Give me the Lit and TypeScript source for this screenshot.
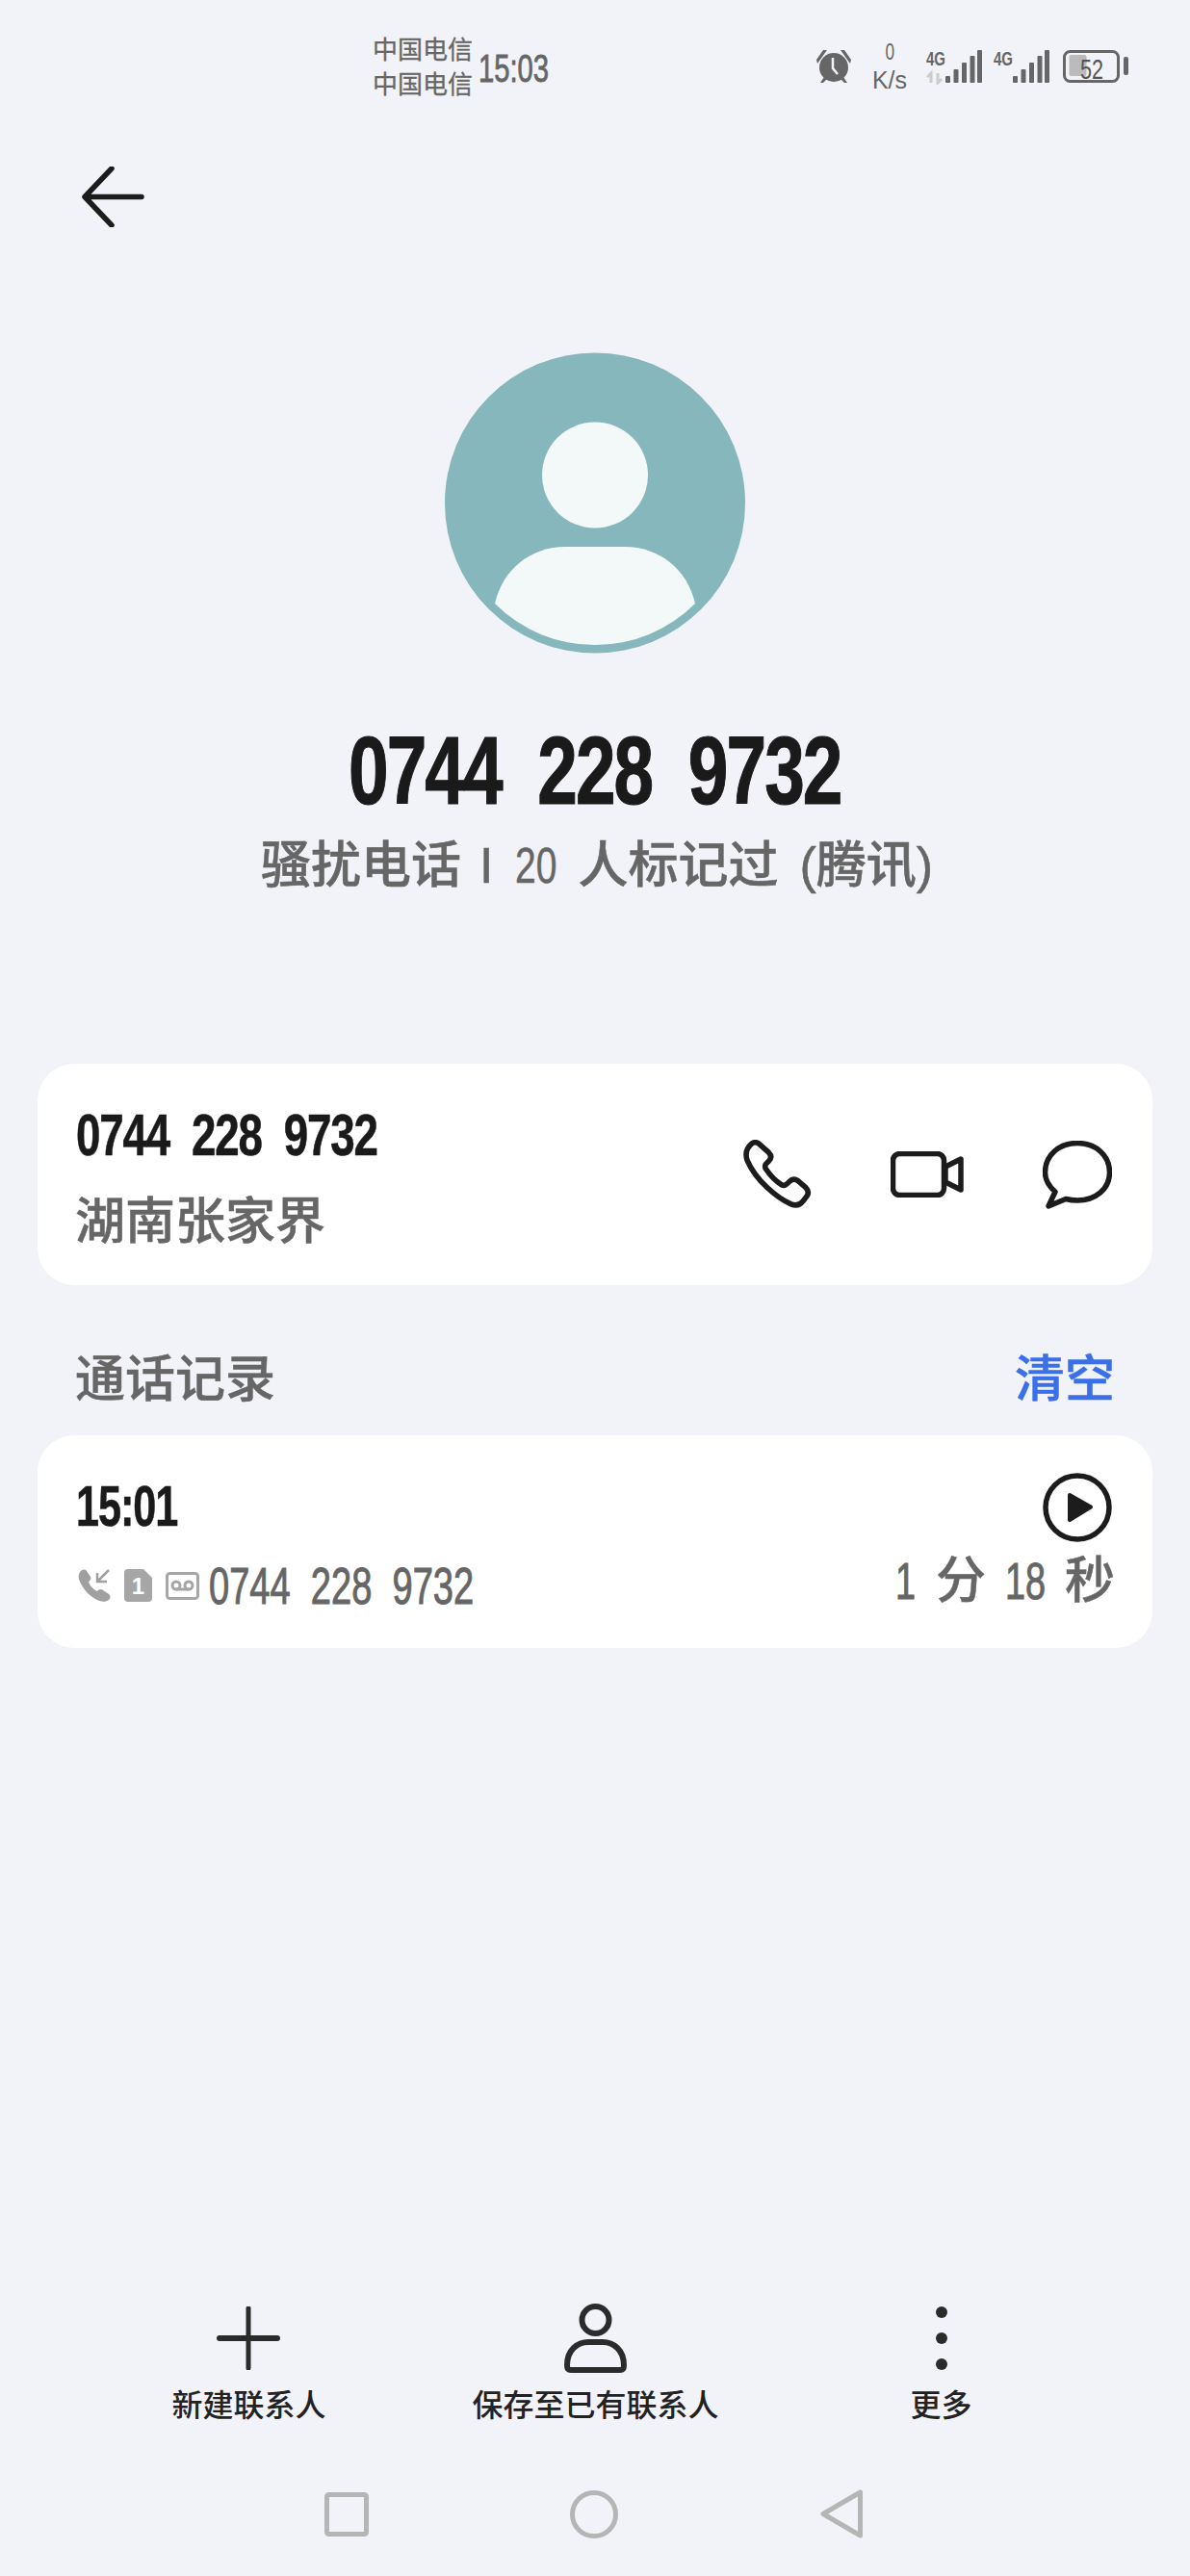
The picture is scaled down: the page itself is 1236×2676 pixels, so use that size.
import { LitElement, css, html, svg } from 'lit';
import { customElement } from 'lit/decorators.js';

// digits in the reference are much narrower than Liberation Sans, so they get squeezed
const sq = (text: string, cls: string) => html`<span class="sq ${cls}"><span>${text}</span></span>`;

const signal = (arrows: boolean) => html`
  <svg class="signal" width="58" height="38" viewBox="0 0 58 38">
    <text x="0" y="18" font-size="21" font-weight="700" fill="#666" textLength="20" lengthAdjust="spacingAndGlyphs">4G</text>
    ${arrows
      ? svg`<path d="M5 36V26l-4 4M12 26v10l4-4" fill="none" stroke="#ccc" stroke-width="3"/>`
      : null}
    <rect x="20" y="29" width="5" height="7" rx="1" fill="#666" />
    <rect x="28.500" y="22" width="5" height="14" rx="1" fill="#666" />
    <rect x="37" y="15" width="5" height="21" rx="1" fill="#666" />
    <rect x="45.500" y="8" width="5" height="28" rx="1" fill="#666" />
    <rect x="53" y="2" width="5" height="34" rx="1" fill="#666" />
  </svg>
`;

@customElement('app-root')
export class AppRoot extends LitElement {
  static styles = css`
    :host {
      display: flex;
      flex-direction: column;
      width: 1236px;
      height: 2676px;
      background: #f1f3f8;
      font-family: 'Liberation Sans', 'Noto Sans CJK SC', sans-serif;
      color: #666;
    }
    svg {
      display: block;
      flex: none;
    }
    .sq {
      display: inline-block;
      white-space: pre;
      flex: none;
    }
    .sq > span {
      display: inline-block;
      transform-origin: left center;
    }

    /* status bar */
    .status {
      display: flex;
      align-items: center;
      height: 138px;
      padding: 0 64px 0 387px;
      box-sizing: border-box;
    }
    .carriers {
      font-size: 26px;
      line-height: 36px;
      width: 104px;
      margin-top: 2px;
      -webkit-text-stroke: 0.3px #666;
    }
    .clock {
      width: 73px;
      margin: 4px 0 0 6px;
      font-size: 40px;
      line-height: 40px;
      -webkit-text-stroke: 0.8px #666;
    }
    .clock > span {
      transform: scaleX(0.73);
    }
    .alarm {
      margin-left: auto;
    }
    .speed {
      width: 36px;
      margin-left: 22px;
      display: flex;
      flex-direction: column;
      align-items: center;
      font-size: 25px;
      line-height: 29px;
    }
    .speed .zero {
      font-size: 23px;
      transform: scaleX(0.75);
    }
    .signal {
      margin-left: 20px;
    }
    .signal + .signal {
      margin-left: 12px;
    }
    .battery {
      margin-left: 14px;
    }

    .back {
      margin: 35px 0 0 85px;
    }
    .avatar {
      margin: 130px auto 0;
    }

    .title {
      display: flex;
      justify-content: center;
      margin-top: 71px;
      font-size: 101px;
      line-height: 101px;
      font-weight: 700;
      color: #1a1a1a;
      -webkit-text-stroke: 1.2px #1a1a1a;
    }
    .title .sq {
      width: 513px;
    }
    .title .sq > span {
      letter-spacing: -2.600px;
      transform: scaleX(0.74);
    }

    .subtitle {
      display: flex;
      margin-top: 22px;
      padding-left: 271px;
      font-size: 52px;
      line-height: 52px;
      font-weight: 500;
      -webkit-text-stroke: 0.5px #666;
    }
    .subtitle .bar {
      margin-left: 19px;
    }
    .subtitle .count {
      width: 44px;
      margin-left: 23px;
    }
    .subtitle .count > span {
      transform: scaleX(0.75);
    }
    .subtitle .marked {
      margin-left: 21px;
    }
    .subtitle .source {
      margin-left: 22px;
    }

    .card {
      margin: 0 39px;
      background: #fff;
      border-radius: 38px;
      padding: 0 42px;
      display: flex;
    }

    .contact {
      margin-top: 180px;
      height: 230px;
      align-items: center;
    }
    .contact-text {
      flex: 1;
      align-self: flex-start;
      padding-top: 44px;
    }
    .number {
      display: block;
      width: 312px;
      margin-left: -2px;
      font-size: 61px;
      line-height: 61px;
      font-weight: 700;
      color: #1a1a1a;
      -webkit-text-stroke: 0.6px #1a1a1a;
    }
    .number > span {
      letter-spacing: -1.600px;
      transform: scaleX(0.75);
    }
    .place {
      margin: 33px 0 0 -3px;
      font-size: 52px;
      line-height: 52px;
      font-weight: 500;
      -webkit-text-stroke: 0.5px #666;
    }
    .contact-actions {
      display: flex;
      align-items: center;
      gap: 82px;
    }

    .section {
      display: flex;
      justify-content: space-between;
      margin-top: 72px;
      padding: 0 78px;
      font-size: 52px;
      line-height: 52px;
      font-weight: 500;
      -webkit-text-stroke: 0.5px currentColor;
    }
    .clear {
      color: #3b6fe8;
    }

    .record {
      margin-top: 32px;
      height: 221px;
      justify-content: space-between;
    }
    .record-main {
      padding-top: 44px;
    }
    .time {
      display: block;
      width: 103px;
      margin-left: -2px;
      font-size: 60px;
      line-height: 60px;
      font-weight: 700;
      color: #1a1a1a;
      -webkit-text-stroke: 0.6px #1a1a1a;
    }
    .time > span {
      letter-spacing: -1.500px;
      transform: scaleX(0.72);
    }
    .record-line {
      display: flex;
      align-items: center;
      margin-top: 25px;
      height: 54px;
    }
    .record-line svg {
      margin-right: 14px;
    }
    .record-line .dial {
      width: 275px;
      margin-left: -4px;
      font-size: 54px;
      line-height: 54px;
      -webkit-text-stroke: 1px #666;
    }
    .record-line .dial > span {
      transform: scaleX(0.705);
    }
    .record-side {
      display: flex;
      flex-direction: column;
      align-items: flex-end;
      padding-top: 39px;
    }
    .duration {
      display: flex;
      margin: 14px -3px 0 0;
      font-size: 52px;
      line-height: 52px;
      font-weight: 500;
      -webkit-text-stroke: 0.4px #666;
    }
    .duration .sq {
      font-size: 54px;
      -webkit-text-stroke: 1px #666;
    }
    .duration .sq > span {
      transform: scaleX(0.7);
    }
    .duration .one {
      width: 21px;
      margin-right: 21px;
    }
    .duration .eighteen {
      width: 42px;
      margin: 0 20px;
    }

    /* bottom actions */
    .actions {
      display: grid;
      grid-template-columns: 361px 361px 357px;
      margin-top: auto;
      padding-left: 77px;
    }
    .action {
      display: flex;
      flex-direction: column;
      align-items: center;
      font-size: 32px;
      line-height: 32px;
      font-weight: 500;
      color: #222;
    }
    .action:first-child span {
      margin-left: 2px;
    }
    .action-icon {
      display: flex;
      align-items: center;
      height: 72px;
      margin-bottom: 18px;
    }

    .nav {
      display: grid;
      grid-template-columns: repeat(3, 257px);
      justify-items: center;
      align-items: center;
      margin-top: 71px;
      padding: 0 0 39px 231px;
    }
  `;

  render() {
    return html`
      <div class="status">
        <div class="carriers">中国电信<br />中国电信</div>
        ${sq('15:03', 'clock')}
        <svg class="alarm" width="36" height="34" viewBox="0 0 36 34">
          <ellipse cx="18" cy="18" rx="15" ry="15" fill="#666" />
          <path d="M0 10 7 0h4L1 14zM36 10 29 0h-4l10 14zM4 34l4-6 3 2-4 4zM32 34l-4-6-3 2 4 4z" fill="#666" />
          <path d="M17 8v11l5 6" fill="none" stroke="#f1f3f8" stroke-width="2.500" />
        </svg>
        <div class="speed"><span class="zero">0</span><span>K/s</span></div>
        ${signal(true)} ${signal(false)}
        <svg class="battery" width="68" height="40" viewBox="0 0 68 40">
          <rect x="1.500" y="4.500" width="56" height="31" rx="6" fill="none" stroke="#666" stroke-width="3" />
          <rect x="6.500" y="8" width="18" height="22" rx="2" fill="#bbb" />
          <rect x="63" y="10" width="5" height="19" rx="2" fill="#666" />
          <text x="18" y="33" font-size="30" fill="#555" textLength="24" lengthAdjust="spacingAndGlyphs">52</text>
        </svg>
      </div>

      <svg class="back" width="65" height="63" viewBox="0 0 65 63">
        <path d="M62 31.500H4M31 2 3 31.500 31 61" fill="none" stroke="#1c1c1c" stroke-width="5.500" stroke-linecap="round" stroke-linejoin="round" />
      </svg>

      <svg class="avatar" width="312" height="313" viewBox="0 0 312 313">
        <circle cx="156" cy="156.500" r="156" fill="#86b7bc" />
        <circle cx="156" cy="127.500" r="55" fill="#f3f9f9" />
        <path d="M52 261C60 225 90 202 125 202H187C222 202 252 225 260 261A147 147 0 0 1 52 261Z" fill="#f3f9f9" />
      </svg>

      <div class="title">${sq('0744  228  9732', '')}</div>
      <div class="subtitle">
        <span>骚扰电话</span>
        <span class="bar">I</span>
        ${sq('20', 'count')}
        <span class="marked">人标记过</span>
        <span class="source">(腾讯)</span>
      </div>

      <div class="card contact">
        <div class="contact-text">
          ${sq('0744  228  9732', 'number')}
          <div class="place">湖南张家界</div>
        </div>
        <div class="contact-actions">
          <svg width="72" height="72" viewBox="0 0 71 71" fill="none" stroke="#1c1c1c" stroke-width="5.500" stroke-linejoin="round">
            <path d="M9 4.500C12 2 15 2.500 17 4L27 13C30 16 30 19 27 22L24 25C23 27 23 29 25 31C29 37 34 42 40 46C42 47 44 47 46 45L48 43C51 40 54 40 57 42L65 49C68 52 68 55 66 58L62 63C59 67 55 68 50 66C36 60 14 42 5 21C3 15 4 9 9 4.500Z" />
          </svg>
          <svg width="76" height="48" viewBox="0 0 76 48" fill="none" stroke="#1c1c1c" stroke-width="5.500" stroke-linejoin="round">
            <rect x="2.500" y="2.500" width="53" height="43" rx="7" />
            <path d="M57 16 73 8V40L57 32Z" />
          </svg>
          <svg width="72" height="71" viewBox="0 0 72 71" fill="none" stroke="#1c1c1c" stroke-width="5.500" stroke-linejoin="round">
            <path d="M13 53C6 47 2.500 40 2.500 33C2.500 15 17 2.500 36 2.500C55 2.500 69.500 15 69.500 33C69.500 50 55 62 36 62C32 62 28 61.500 24 60.500L6 68Z" />
          </svg>
        </div>
      </div>

      <div class="section">
        <span>通话记录</span>
        <span class="clear">清空</span>
      </div>

      <div class="card record">
        <div class="record-main">
          ${sq('15:01', 'time')}
          <div class="record-line">
            <svg width="34" height="34" viewBox="0 0 34 34">
              <path d="M3 2C5 0 8 0 9 2L13 8C14 10 13 12 11 13C12 17 16 21 20 23C21 21 24 20 26 22L32 26C34 28 34 30 32 32C28 35 23 34 18 31C11 27 5 20 2 13C0 9 0 5 3 2Z" fill="#a0a0a0" />
              <path d="M32 1 20 13M20 4V13H30" fill="none" stroke="#a0a0a0" stroke-width="2.500" />
            </svg>
            <svg width="29" height="34" viewBox="0 0 29 34">
              <path d="M4 0H20L29 9V30A4 4 0 0 1 25 34H4A4 4 0 0 1 0 30V4A4 4 0 0 1 4 0Z" fill="#a6a6a6" />
              <text x="14.500" y="26" font-size="24" font-weight="700" fill="#fff" text-anchor="middle">1</text>
            </svg>
            <svg width="35" height="29" viewBox="0 0 35 29" fill="none" stroke="#a6a6a6" stroke-width="3">
              <rect x="1.500" y="1.500" width="32" height="26" rx="3" />
              <circle cx="11" cy="14" r="4" />
              <circle cx="24" cy="14" r="4" />
              <path d="M11 18H24" />
            </svg>
            ${sq('0744  228  9732', 'dial')}
          </div>
        </div>
        <div class="record-side">
          <svg width="72" height="72" viewBox="0 0 72 72">
            <circle cx="36" cy="36" r="33" fill="none" stroke="#1c1c1c" stroke-width="5.500" />
            <path d="M28 23 50 35.500 28 49Z" fill="#1c1c1c" stroke="#1c1c1c" stroke-width="4" stroke-linejoin="round" />
          </svg>
          <div class="duration">
            ${sq('1', 'one')}
            <span>分</span>
            ${sq('18', 'eighteen')}
            <span>秒</span>
          </div>
        </div>
      </div>

      <div class="actions">
        <div class="action">
          <div class="action-icon">
            <svg width="66" height="66" viewBox="0 0 66 66" stroke="#2b2b2b" stroke-linecap="round">
              <path d="M33 2V64" stroke-width="5" />
              <path d="M3 33H63" stroke-width="6" />
            </svg>
          </div>
          <span>新建联系人</span>
        </div>
        <div class="action">
          <div class="action-icon">
            <svg width="66" height="72" viewBox="0 0 66 72" fill="none" stroke="#2b2b2b" stroke-width="6" stroke-linejoin="round">
              <circle cx="32.500" cy="17" r="14" />
              <path d="M3 64C3 48 14 40 25 40H40C51 40 62 48 62 64C62 67 61 69 58 69H7C4 69 3 67 3 64Z" />
            </svg>
          </div>
          <span>保存至已有联系人</span>
        </div>
        <div class="action">
          <div class="action-icon">
            <svg width="12" height="66" viewBox="0 0 12 66" fill="#2b2b2b">
              <circle cx="6" cy="6" r="6" />
              <circle cx="6" cy="33" r="6" />
              <circle cx="6" cy="60" r="6" />
            </svg>
          </div>
          <span>更多</span>
        </div>
      </div>

      <div class="nav">
        <svg width="46" height="46" viewBox="0 0 46 46">
          <rect x="2.500" y="2.500" width="41" height="41" rx="2" fill="none" stroke="#b5b5b5" stroke-width="5" />
        </svg>
        <svg width="50" height="50" viewBox="0 0 50 50">
          <circle cx="25" cy="25" r="22.500" fill="none" stroke="#b5b5b5" stroke-width="5" />
        </svg>
        <svg width="44" height="51" viewBox="0 0 44 51">
          <path d="M41.500 3V48L3 25.500Z" fill="none" stroke="#b5b5b5" stroke-width="5" stroke-linejoin="round" />
        </svg>
      </div>
    `;
  }
}
